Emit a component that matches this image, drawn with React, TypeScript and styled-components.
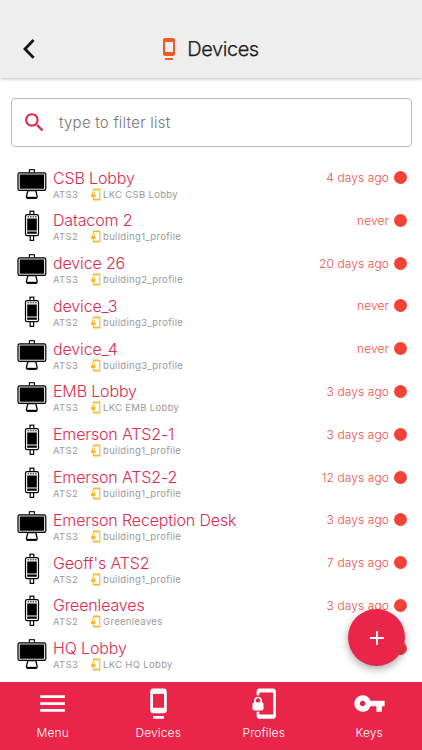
import React, {useState} from 'react';
import styled, {createGlobalStyle} from 'styled-components';
import {
  MdDock,
  MdMenu,
  MdPhonelinkLock,
  MdSearch,
  MdVpnKey,
} from 'react-icons/md';

type Model = 'ATS2' | 'ATS3';

type Device = {
  name: string;
  model: Model;
  profile: string;
  lastSeen: string;
};

const devices: Device[] = [
  {name: 'CSB Lobby', model: 'ATS3', profile: 'LKC CSB Lobby', lastSeen: '4 days ago'},
  {name: 'Datacom 2', model: 'ATS2', profile: 'building1_profile', lastSeen: 'never'},
  {name: 'device 26', model: 'ATS3', profile: 'building2_profile', lastSeen: '20 days ago'},
  {name: 'device_3', model: 'ATS2', profile: 'building3_profile', lastSeen: 'never'},
  {name: 'device_4', model: 'ATS3', profile: 'building3_profile', lastSeen: 'never'},
  {name: 'EMB Lobby', model: 'ATS3', profile: 'LKC EMB Lobby', lastSeen: '3 days ago'},
  {name: 'Emerson ATS2-1', model: 'ATS2', profile: 'building1_profile', lastSeen: '3 days ago'},
  {name: 'Emerson ATS2-2', model: 'ATS2', profile: 'building1_profile', lastSeen: '12 days ago'},
  {name: 'Emerson Reception Desk', model: 'ATS3', profile: 'building1_profile', lastSeen: '3 days ago'},
  {name: "Geoff's ATS2", model: 'ATS2', profile: 'building1_profile', lastSeen: '7 days ago'},
  {name: 'Greenleaves', model: 'ATS2', profile: 'Greenleaves', lastSeen: '3 days ago'},
  {name: 'HQ Lobby', model: 'ATS3', profile: 'LKC HQ Lobby', lastSeen: 'never'},
];

const navItems = [
  {label: 'Menu', Icon: MdMenu},
  {label: 'Devices', Icon: MdDock},
  {label: 'Profiles', Icon: MdPhonelinkLock},
  {label: 'Keys', Icon: MdVpnKey},
];

// ATS3: wall screen on a stand
function ScreenIcon() {
  return (
    <svg width="30" height="32" viewBox="0 0 30 32" fill="none" stroke="#000">
      <rect x="12.4" y="1.7" width="5" height="4" strokeWidth="1.1" />
      <path d="M10.8 22.6h8l1.3 5.6q.3 2-1.3 2h-8q-1.6 0-1.3-2z" strokeWidth="1.3" fill="#fff" />
      <path d="M10 29.8h9.6" strokeWidth="2" />
      <rect x="1" y="4.8" width="27.8" height="17.6" rx="1.6" strokeWidth="1.2" fill="#ddd" />
      <rect x="2.8" y="6.5" width="24.2" height="14.2" fill="#000" stroke="none" />
    </svg>
  );
}

// ATS2: handheld reader
function ReaderIcon() {
  return (
    <svg width="30" height="32" viewBox="0 0 30 32" fill="none" stroke="#000">
      <rect x="13" y="1.2" width="3.8" height="5" strokeWidth="1.2" />
      <rect x="13.2" y="25" width="3.4" height="5.4" strokeWidth="1.2" />
      <rect x="8.5" y="4.6" width="13" height="21" rx="1.6" strokeWidth="1.2" fill="#fff" />
      <path d="M10.6 6.8h9" strokeWidth="1" strokeDasharray="1.5 1" />
      <path d="M10.2 8.5h9.6v12h-9.6zM10.2 21.6h9.6v2.2h-9.6z" fill="#000" stroke="none" />
    </svg>
  );
}

function DeviceRow({name, model, profile, lastSeen}: Device) {
  return (
    <Row>
      {model === 'ATS3' ? <ScreenIcon /> : <ReaderIcon />}
      <Info>
        <Name>{name}</Name>
        <Meta>
          <ModelName>{model}</ModelName>
          <MdPhonelinkLock size={13} color="#f7b924" />
          <span>{profile}</span>
        </Meta>
      </Info>
      <Status>
        {lastSeen}
        <Dot />
      </Status>
    </Row>
  );
}

function App() {
  const [filter, setFilter] = useState('');

  const filtered = devices.filter(device =>
    device.name.toLowerCase().includes(filter.toLowerCase()),
  );

  return (
    <>
      <GlobalStyle />
      <Screen>
        <Header>
          <BackButton aria-label="Back">
            <svg width="14" height="22" viewBox="0 0 14 22" fill="none">
              <path d="M12.6 2L4 11l8.6 8.8" stroke="#161616" strokeWidth="2.8" />
            </svg>
          </BackButton>
          <Title>
            <MdDock size={24} color="#f15a24" />
            <span>Devices</span>
          </Title>
        </Header>
        <SearchBox>
          <MdSearch size={25} color="#e0264c" />
          <SearchInput
            placeholder="type to filter list"
            value={filter}
            onChange={e => setFilter(e.target.value)}
          />
        </SearchBox>
        <List>
          {filtered.map(device => (
            <DeviceRow key={device.name} {...device} />
          ))}
        </List>
        <AddButton aria-label="Add device">
          <svg width="16" height="16" viewBox="0 0 16 16">
            <path d="M8 1v14M1 8h14" stroke="#fff" strokeWidth="1.8" />
          </svg>
        </AddButton>
        <Nav>
          {navItems.map(({label, Icon}) => (
            <NavItem key={label}>
              <Icon size={33} />
              <span>{label}</span>
            </NavItem>
          ))}
        </Nav>
      </Screen>
    </>
  );
}

const GlobalStyle = createGlobalStyle`
  * {
    box-sizing: border-box;
  }

  body {
    margin: 0;
    background: #fff;
    font-family: Inter, 'Liberation Sans', sans-serif;
    font-weight: 300;
  }

  button {
    border: 0;
    padding: 0;
    font: inherit;
  }

  svg {
    display: block;
    flex-shrink: 0;
  }
`;

const Screen = styled.div`
  position: relative;
  display: flex;
  flex-direction: column;
  height: 750px;
  overflow: hidden;
`;

const Header = styled.header`
  display: grid;
  grid-template-columns: 60px 1fr 60px;
  align-items: center;
  flex-shrink: 0;
  height: 78px;
  padding-top: 20px;
  background: #eee;
  box-shadow: 0 1px 3px rgba(0, 0, 0, 0.25);
`;

const BackButton = styled.button`
  padding-left: 21px;
  background: none;
`;

const Title = styled.div`
  display: flex;
  justify-content: center;
  align-items: center;
  gap: 6px;
  padding: 0 6px 1px 0;
  color: #1a1a1a;
  font-size: 20px;
  letter-spacing: -0.45px;
  -webkit-text-stroke: 0.25px #1a1a1a;
`;

const SearchBox = styled.label`
  display: flex;
  align-items: center;
  flex-shrink: 0;
  gap: 12px;
  height: 49px;
  margin: 20px 10px 0 11px;
  padding: 0 11px 0 10px;
  border: 1px solid #bdbdbd;
  border-radius: 4px;
`;

const SearchInput = styled.input`
  flex: 1;
  min-width: 0;
  padding: 0;
  border: 0;
  outline: none;
  font: inherit;
  font-size: 15px;
  letter-spacing: 0.24px;

  &::placeholder {
    color: #767676;
    opacity: 1;
  }
`;

const List = styled.div`
  flex: 1;
  min-height: 0;
  padding: 16px 15px 0 17px;
  overflow: hidden;
`;

const Row = styled.div`
  display: flex;
  align-items: flex-start;
  height: 42.8px;
  padding-top: 4.5px;
`;

const Info = styled.div`
  flex: 1;
  margin-left: 6px;
`;

const Name = styled.div`
  color: #dc2a50;
  font-size: 16px;
  line-height: 20px;
  letter-spacing: -0.15px;
`;

const Meta = styled.div`
  display: flex;
  align-items: center;
  color: #999;
  font-size: 9.5px;
  font-weight: 400;
  line-height: 13px;
  letter-spacing: 0.32px;
`;

const ModelName = styled.span`
  width: 36px;

  & + svg {
    margin-right: 1px;
  }
`;

const Status = styled.div`
  display: flex;
  align-items: center;
  gap: 5px;
  height: 20px;
  color: #ee4f46;
  font-size: 12px;
  letter-spacing: 0.1px;
`;

const Dot = styled.i`
  width: 13px;
  height: 13px;
  border-radius: 50%;
  background: #f44336;
`;

const AddButton = styled.button`
  position: absolute;
  right: 17px;
  bottom: 84px;
  display: flex;
  justify-content: center;
  align-items: center;
  width: 57px;
  height: 57px;
  border-radius: 50%;
  background: #e9264a;
  box-shadow: 0 3px 8px rgba(0, 0, 0, 0.35);
`;

const Nav = styled.nav`
  display: grid;
  grid-template-columns: repeat(4, 1fr);
  flex-shrink: 0;
  height: 68px;
  background: #e9264a;
`;

const NavItem = styled.button`
  display: flex;
  flex-direction: column;
  align-items: center;
  padding-top: 5px;
  background: none;
  color: #fff;
  font-size: 12px;
  line-height: 16px;
  letter-spacing: 0.1px;

  span {
    margin-top: 5px;
  }
`;

export default App;
